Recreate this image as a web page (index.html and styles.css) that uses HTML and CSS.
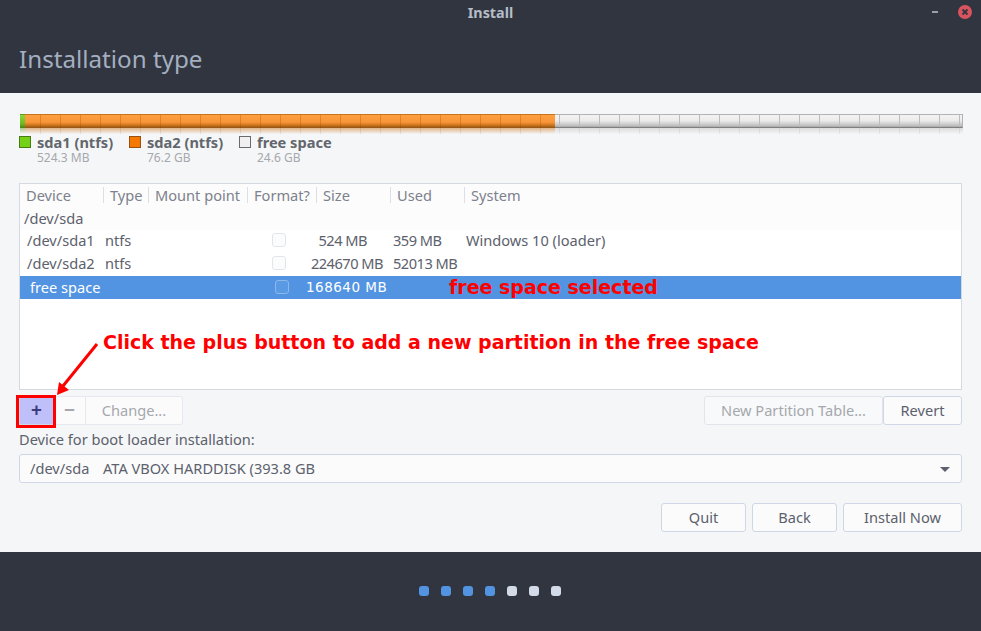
FILE: index.html
```html
<!DOCTYPE html>
<html lang="en">
<head>
    <meta charset="UTF-8">
    <meta name="viewport" content="width=device-width, initial-scale=1.0">
    <title>Install</title>
    <link rel="stylesheet" href="styles.css">
</head>
<body>

    <header class="top">
        <div class="titlebar">
            <span class="titlebar-name">Install</span>
            <span class="win-min"></span>
            <span class="win-close">
                <svg width="14" height="14" viewBox="0 0 14 14"><path d="M4.500 4.500l5 5M9.500 4.500l-5 5" stroke="#31353f" stroke-width="1.800" fill="none"/></svg>
            </span>
        </div>
        <h1 class="page-title">Installation type</h1>
    </header>

    <main class="content">
        <!-- partition bar -->
        <div class="part-bar">
            <div class="seg seg-green"></div>
            <div class="seg seg-orange"></div>
            <div class="seg seg-free"></div>
        </div>
        <div class="part-reflect">
            <div class="ref ref-green"></div>
            <div class="ref ref-orange"></div>
            <div class="ref ref-free"></div>
        </div>

        <div class="legend">
            <div class="legend-item legend-a">
                <span class="swatch swatch-green"></span>
                <div class="legend-text"><div class="legend-name">sda1 (ntfs)</div><div class="legend-size">524.3 MB</div></div>
            </div>
            <div class="legend-item legend-b">
                <span class="swatch swatch-orange"></span>
                <div class="legend-text"><div class="legend-name">sda2 (ntfs)</div><div class="legend-size">76.2 GB</div></div>
            </div>
            <div class="legend-item">
                <span class="swatch swatch-free"></span>
                <div class="legend-text"><div class="legend-name">free space</div><div class="legend-size">24.6 GB</div></div>
            </div>
        </div>

        <!-- partition table -->
        <div class="table">
            <div class="row head">
                <span class="th th-device">Device</span>
                <span class="th th-type">Type</span>
                <span class="th th-mount">Mount point</span>
                <span class="th th-format">Format?</span>
                <span class="th th-size">Size</span>
                <span class="th th-used">Used</span>
                <span class="th th-system">System</span>
            </div>
            <div class="row disk">/dev/sda</div>
            <div class="row part">
                <span class="c-device">/dev/sda1</span>
                <span class="c-type">ntfs</span>
                <span class="check"></span>
                <span class="c-size c-size-short">524 MB</span>
                <span class="c-used">359 MB</span>
                <span class="c-system">Windows 10 (loader)</span>
            </div>
            <div class="row part">
                <span class="c-device">/dev/sda2</span>
                <span class="c-type">ntfs</span>
                <span class="check"></span>
                <span class="c-size">224670 MB</span>
                <span class="c-used">52013 MB</span>
            </div>
            <div class="row selected">
                <span class="sel-device">free space</span>
                <span class="check check-sel"></span>
                <span class="sel-size">168640 MB</span>
                <span class="sel-note">free space selected</span>
            </div>
        </div>

        <div class="toolbar">
            <div class="btn-group">
                <button class="btn btn-plus">+</button>
                <button class="btn btn-minus">&minus;</button>
                <button class="btn btn-change">Change...</button>
            </div>
            <div class="toolbar-right">
                <button class="btn btn-off btn-newtable">New Partition Table...</button>
                <button class="btn btn-revert">Revert</button>
            </div>
        </div>

        <label class="boot-label">Device for boot loader installation:</label>
        <div class="combo">
            <span class="combo-dev">/dev/sda</span>
            <span>ATA VBOX HARDDISK (393.8 GB</span>
            <span class="combo-arrow"></span>
        </div>

        <div class="actions">
            <button class="btn btn-quit">Quit</button>
            <button class="btn btn-back">Back</button>
            <button class="btn btn-install">Install Now</button>
        </div>
    </main>

    <footer class="bottom">
        <span class="dot on"></span>
        <span class="dot on"></span>
        <span class="dot on"></span>
        <span class="dot on"></span>
        <span class="dot"></span>
        <span class="dot"></span>
        <span class="dot"></span>
    </footer>

    <!-- annotation drawn on top of the screenshot -->
    <div class="note">Click the plus button to add a new partition in the free space</div>
    <div class="plus-mark"></div>
    <svg class="note-arrow" width="60" height="70" viewBox="0 0 60 70">
        <path d="M42 11L8 53" stroke="#f00" stroke-width="3" fill="none"/>
        <path d="M2 62L4 49L14 57Z" fill="#f00"/>
    </svg>

</body>
</html>
```

FILE: styles.css
```css
* {
  margin: 0;
  padding: 0;
  box-sizing: border-box;
  font-family: "Noto Sans", sans-serif;
}

html, body {
  width: 981px;
  height: 631px;
  overflow: hidden;
}

body {
  display: flex;
  flex-direction: column;
  background: #f5f6f7;
  color: #5c616c;
  font-size: 14.600px;
  position: relative;
}

/* top dark area */
.top {
  height: 93px;
  background: #31353f;
}

.titlebar {
  height: 26px;
  padding-bottom: 2px;
  display: flex;
  align-items: center;
  justify-content: center;
  position: relative;
}

.titlebar-name {
  color: #b5bcc7;
  font-weight: bold;
  font-size: 14.400px;
}

.win-min {
  position: absolute;
  left: 932px;
  top: 11px;
  width: 6px;
  height: 2px;
  background: #99a0ab;
}

.win-close {
  position: absolute;
  left: 958px;
  top: 5px;
  width: 14px;
  height: 14px;
  border-radius: 50%;
  background: #d9545f;
  display: flex;
}

.page-title {
  font-weight: normal;
  font-size: 24.200px;
  line-height: 32px;
  color: #a3afc0;
  padding: 17px 0 0 19px;
}

/* main area */
.content {
  height: 459px;
  padding: 21px 19px 0;
}

.part-bar {
  display: flex;
  height: 14px;
  margin-left: 1px;
  width: 943px;
}

.seg {
  height: 14px;
}

.seg-green {
  width: 5px;
  background: linear-gradient(#8ed83f, #6cb61e 70%, #4b7f15);
  border-top: 1px solid #5c9a1a;
}

.seg-orange {
  width: 530px;
  border-top: 1px solid #c8741e;
  background:
    repeating-linear-gradient(to right, transparent 0, transparent 15px, rgba(140, 70, 0, .28) 15px, rgba(140, 70, 0, .28) 16px, transparent 16px, transparent 20px),
    linear-gradient(#ffa040 0, #f8953a 55%, #d47a20 75%, #8e5212);
}

.seg-free {
  flex: 1;
  border: 1px solid #b3b3b3;
  border-left: 0;
  border-bottom-color: #7f7f7f;
  background:
    repeating-linear-gradient(to right, transparent 0, transparent 4px, #bdbdbd 4px, #bdbdbd 5px, transparent 5px, transparent 20px),
    linear-gradient(#f3f3f3 0, #ececec 45%, #c4c4c4 85%, #a8a8a8);
}

.part-reflect {
  display: flex;
  height: 6px;
  margin-left: 1px;
  width: 943px;
}

.ref-green {
  width: 5px;
  background: linear-gradient(#a8c888, #f5f6f7);
}

.ref-orange {
  width: 530px;
  background:
    repeating-linear-gradient(to right, transparent 0, transparent 15px, rgba(140, 70, 0, .12) 15px, rgba(140, 70, 0, .12) 16px, transparent 16px, transparent 20px),
    linear-gradient(#e0b488, #f5f6f7);
}

.ref-free {
  flex: 1;
  background:
    repeating-linear-gradient(to right, transparent 0, transparent 4px, rgba(0, 0, 0, .06) 4px, rgba(0, 0, 0, .06) 5px, transparent 5px, transparent 20px),
    linear-gradient(#dcdcdc, #f5f6f7);
}

.legend {
  display: flex;
  margin-top: 2px;
  height: 30px;
}

.legend-item {
  display: flex;
  gap: 6px;
}

.legend-a,
.legend-b {
  width: 110px;
}

.legend-text {
  margin-top: -1px;
}

.swatch {
  width: 12px;
  height: 12px;
  border: 1px solid #4b4f55;
}

.swatch-green {
  background: #73d216;
  border-color: #4a7a14;
}

.swatch-orange {
  background: #f57900;
  border-color: #9a5010;
}

.swatch-free {
  background: #f0f0f0;
  border-color: #6a6a6a;
}

.legend-name {
  font-weight: bold;
  font-size: 14.600px;
  line-height: 15px;
  color: #62666d;
}

.legend-size {
  font-size: 12px;
  line-height: 16px;
  color: #a5a8ad;
}

/* table */
.table {
  margin-top: 17px;
  height: 207px;
  background: #fff;
  border: 1px solid #d5d9e2;
}

.row {
  display: flex;
  align-items: center;
  height: 23px;
  padding-bottom: 2px;
}

.head {
  color: #7c818c;
  background: #fcfcfc;
}

.th {
  padding-left: 6px;
  border-left: 1px solid #dcdfe5;
  line-height: 16px;
  flex: none;
  white-space: nowrap;
}

.th-device {
  width: 83px;
  border-left: 0;
}

.th-type {
  width: 45px;
}

.th-mount {
  width: 99px;
}

.th-format {
  width: 69px;
}

.th-size,
.th-used {
  width: 74px;
}

.disk {
  padding-left: 4px;
  background: #fcfcfc;
}

.part {
  margin-left: -3px;
  padding: 0 0 4px 10px;
}

.c-device {
  width: 78px;
  flex: none;
}

.c-type {
  width: 167px;
  flex: none;
}

.check {
  width: 14px;
  height: 14px;
  border: 1px solid #e3e5ec;
  border-radius: 3px;
  background: #fcfcfd;
  flex: none;
}

.c-size {
  width: 107px;
  flex: none;
  text-align: right;
  padding-right: 10px;
  letter-spacing: -.5px;
}

.c-size-short {
  padding-right: 26px;
}

.c-used {
  width: 73px;
  flex: none;
  white-space: nowrap;
  letter-spacing: -.5px;
}

.c-system {
  white-space: nowrap;
}

.selected {
  background: #5294e2;
  color: #fff;
  padding-left: 10px;
}

.sel-device {
  width: 245px;
  flex: none;
}

.check-sel {
  background: #5a99e4;
  border-color: #8cb8ec;
}

.sel-size {
  font-family: "DejaVu Sans", sans-serif;
  font-size: 13.500px;
  letter-spacing: .5px;
  width: 160px;
  flex: none;
  padding-left: 17px;
  white-space: nowrap;
}

.sel-note {
  font-family: "DejaVu Sans", sans-serif;
  font-weight: bold;
  font-size: 19px;
  color: #f00;
  white-space: nowrap;
}

/* buttons */
.btn {
  height: 29px;
  padding-bottom: 2px;
  background: #fbfbfc;
  border: 1px solid #cfd6e6;
  border-radius: 3px;
  color: #5c616c;
  font-size: 14.600px;
}

.toolbar {
  display: flex;
  justify-content: space-between;
  margin-top: 6px;
  height: 29px;
}

.btn-group {
  display: flex;
}

.btn-plus {
  width: 35px;
  background: #bfbffa;
  color: #3c3c7a;
  font-size: 19px;
  font-weight: bold;
  line-height: 20px;
  border-radius: 0;
}

.btn-minus {
  width: 32px;
  color: #a5a8ad;
  font-size: 19px;
  font-weight: bold;
  line-height: 20px;
  border: 1px solid #e6e9ef;
  border-left: 0;
  border-radius: 0;
}

.btn-change {
  width: 97px;
  color: #a5a8ad;
  border: 1px solid #e6e9ef;
  border-left: 0;
  border-radius: 0 3px 3px 0;
}

.toolbar-right {
  display: flex;
}

.btn-off {
  color: #a5a8ad;
  border-color: #e2e5ec;
  background: #f8f9fa;
}

.btn-newtable {
  width: 179px;
}

.btn-revert {
  width: 79px;
}

.boot-label {
  display: block;
  margin-top: 4px;
  line-height: 20px;
}

.combo {
  display: flex;
  align-items: center;
  height: 29px;
  margin-top: 5px;
  padding: 0 10px 2px;
  background: #fbfbfc;
  border: 1px solid #cfd6e6;
  border-radius: 3px;
  position: relative;
}

.combo-dev {
  width: 73px;
}

.combo-arrow {
  position: absolute;
  right: 11px;
  top: 12px;
  border-left: 5px solid transparent;
  border-right: 5px solid transparent;
  border-top: 5px solid #5c616c;
}

.actions {
  display: flex;
  justify-content: flex-end;
  gap: 6px;
  margin-top: 20px;
}

.btn-quit,
.btn-back {
  width: 85px;
}

.btn-install {
  width: 119px;
}

/* bottom dark area */
.bottom {
  height: 79px;
  background: #31353f;
  display: flex;
  justify-content: center;
  align-items: center;
  gap: 12px;
  padding: 0 1px 1px 0;
}

.dot {
  width: 10px;
  height: 10px;
  border-radius: 3px;
  background: #d3dae8;
}

.dot.on {
  background: #5294e2;
}

/* annotation */
.note {
  position: absolute;
  left: 103px;
  top: 330px;
  font-family: "DejaVu Sans", sans-serif;
  font-weight: bold;
  font-size: 19px;
  line-height: 24px;
  color: #f00;
  white-space: nowrap;
}

.plus-mark {
  position: absolute;
  left: 16px;
  top: 395px;
  width: 40px;
  height: 33px;
  border: 3px solid #f00;
}

.note-arrow {
  position: absolute;
  left: 55px;
  top: 333px;
}
```
